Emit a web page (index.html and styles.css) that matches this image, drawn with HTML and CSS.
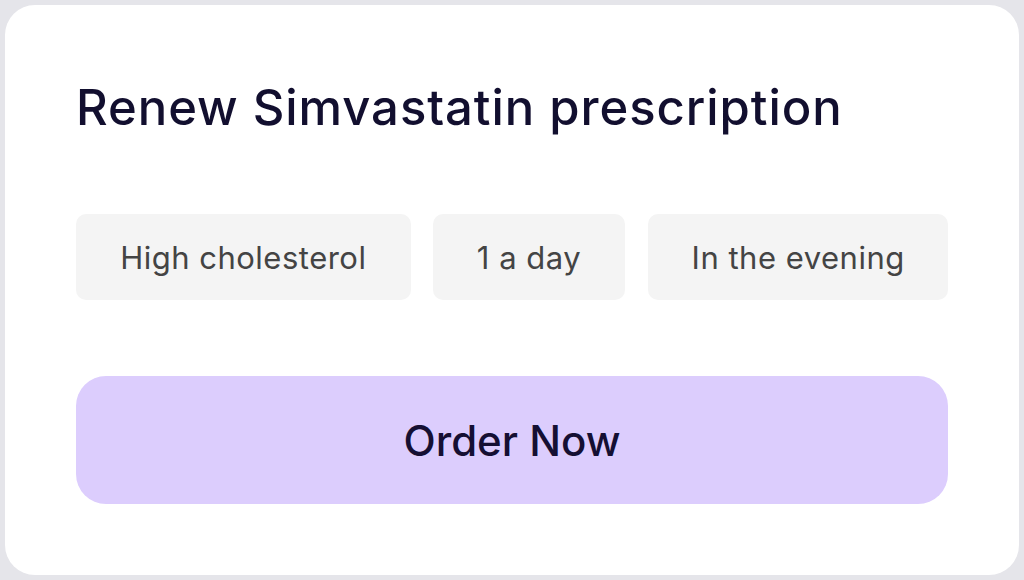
FILE: index.html
```html
<!DOCTYPE html>
<html lang="en">
<head>
<meta charset="utf-8">
<title>Renew prescription</title>
<link rel="stylesheet" href="styles.css">
</head>
<body>
<main class="card">
  <h1 class="title">Renew Simvastatin prescription</h1>
  <ul class="chips">
    <li class="chip chip-wide">High cholesterol</li>
    <li class="chip chip-mid">1 a day</li>
    <li class="chip chip-last">In the evening</li>
  </ul>
  <button class="order">Order Now</button>
</main>
</body>
</html>
```

FILE: styles.css
```css
* { box-sizing: border-box; }
html, body { margin: 0; height: 100%; }
body {
  background: #e5e5ea;
  padding: 5px;
  font-family: Inter, "Noto Sans", sans-serif;
}
.card {
  background: #ffffff;
  border-radius: 30px;
  height: 570px;
  padding: 74px 71px 0 71px;
  display: flex;
  flex-direction: column;
}
.title {
  margin: 0;
  font-size: 49px;
  font-weight: 500;
  line-height: 58px;
  color: #120f2f;
  letter-spacing: 0.95px;
}
.chips {
  list-style: none;
  margin: 77px 0 0 0;
  padding: 0;
  display: flex;
  gap: 21px;
}
.chip {
  height: 86px;
  background: #f4f4f4;
  border-radius: 10px;
  display: flex;
  align-items: center;
  justify-content: center;
  font-size: 31px;
  color: #444444;
  letter-spacing: 0.5px;
}
.chip-wide { width: 335px; }
.chip-mid { width: 193px; margin-left: 1px; }
.chip-last { width: 300px; margin-left: 2px; }
.order {
  margin-top: 76px;
  height: 128px;
  width: 100%;
  border: none;
  border-radius: 30px;
  background: #dccdfd;
  font-family: inherit;
  font-size: 42px;
  font-weight: 500;
  color: #150f33;
}
```
